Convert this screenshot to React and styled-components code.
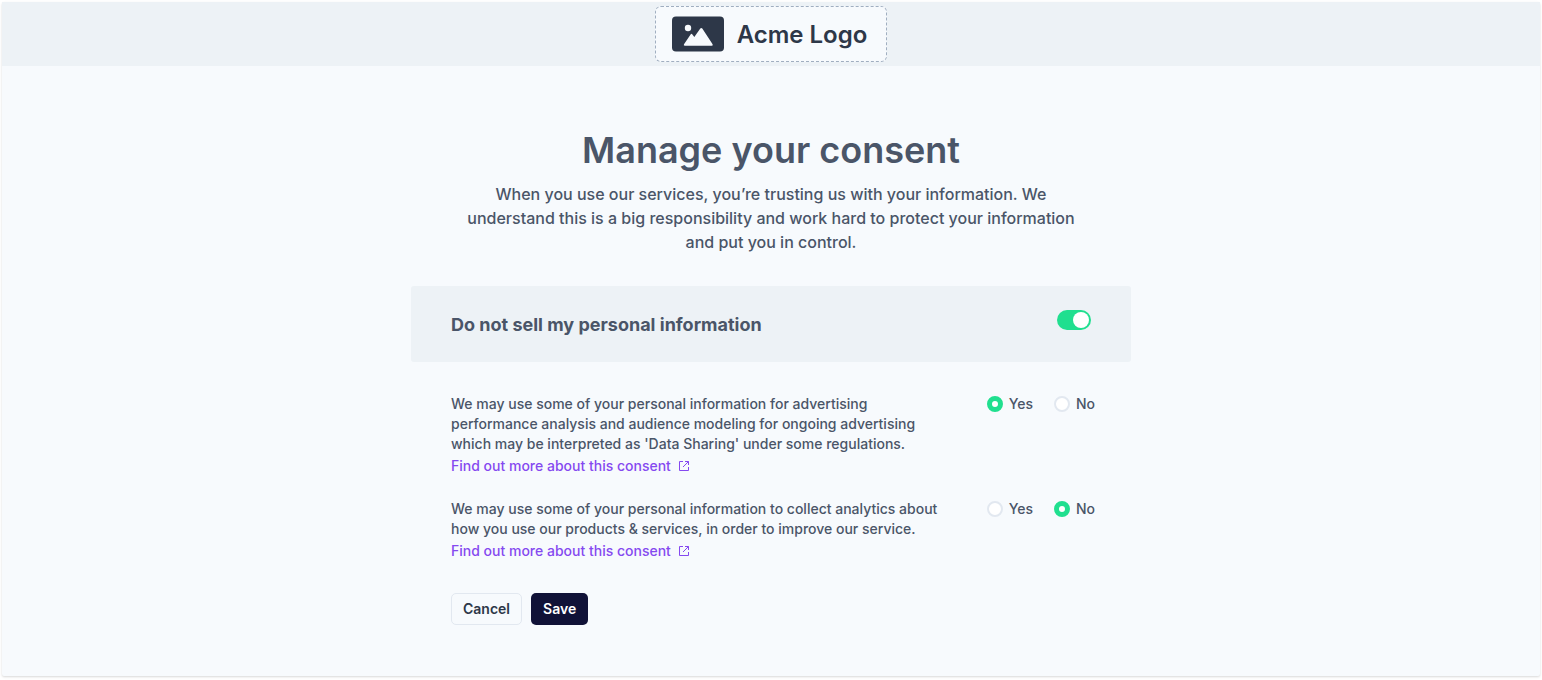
import React, { useState } from "react";
import styled, { createGlobalStyle } from "styled-components";

const GlobalStyle = createGlobalStyle`
  *, *::before, *::after { box-sizing: border-box; }
  body {
    margin: 0;
    background: #ffffff;
    font-family: Inter, "Liberation Sans", sans-serif;
    color: #4a5568;
  }
  h1, h2, p, fieldset { margin: 0; padding: 0; border: 0; }
`;

const Card = styled.div`
  margin: 2px 2px 4px;
  padding-bottom: 51px;
  background: #f7fafd;
  border-radius: 2px;
  box-shadow: 0 1px 3px rgba(0, 0, 0, 0.1), 0 1px 2px rgba(0, 0, 0, 0.06);
`;

const Header = styled.header`
  display: flex;
  justify-content: center;
  padding: 4px;
  background: #edf2f6;
`;

const Brand = styled.div`
  display: flex;
  align-items: center;
  gap: 13px;
  height: 56px;
  padding: 0 19px 0 16px;
  border: 1px dashed #a0aec0;
  border-radius: 6px;
  background: #f7fafd;
  color: #2d3748;
  font-size: 24px;
  line-height: 32px;
  font-weight: 600;
  white-space: nowrap;
`;

const BrandName = styled.span`
  padding-top: 2px;
`;

const Main = styled.main`
  max-width: 720px;
  margin: 0 auto;
  padding-top: 60px;
`;

const Intro = styled.section`
  max-width: 640px;
  margin: 0 auto 32px;
  padding: 0 16px;
  text-align: center;
`;

const Title = styled.h1`
  font-size: 36px;
  line-height: 48px;
  font-weight: 600;
  margin-bottom: 8px;
`;

const Lead = styled.p`
  font-size: 16px;
  line-height: 24px;
  font-weight: 500;
`;

const Panel = styled.label`
  display: flex;
  justify-content: space-between;
  align-items: flex-start;
  padding: 24px 40px 22px;
  border-radius: 3px;
  background: #edf2f6;
`;

const PanelTitle = styled.span`
  font-size: 18px;
  line-height: 30px;
  font-weight: 700;
`;

const Toggle = styled.input`
  appearance: none;
  display: flex;
  width: 34px;
  height: 20px;
  margin: 0;
  padding: 2px;
  border-radius: 10px;
  background: #cbd5e0;
  cursor: pointer;

  &::before {
    content: "";
    width: 16px;
    height: 16px;
    border-radius: 50%;
    background: #ffffff;
  }
  &:checked {
    justify-content: flex-end;
    background: #20df8f;
  }
`;

const Form = styled.form`
  display: flex;
  flex-direction: column;
  gap: 32px;
  padding: 32px 36px 0 40px;
`;

const ConsentList = styled.div`
  display: flex;
  flex-direction: column;
  gap: 23px;
`;

const ConsentRow = styled.div`
  display: flex;
  justify-content: space-between;
  align-items: flex-start;
  gap: 24px;
`;

const ConsentText = styled.div`
  max-width: 496px;
  font-size: 14px;
  line-height: 20px;
  font-weight: 500;
`;

const MoreLink = styled.a`
  display: inline-flex;
  align-items: center;
  gap: 7px;
  margin-top: 2px;
  vertical-align: top;
  color: #8549f0;
  text-decoration: none;
`;

const Choices = styled.fieldset`
  display: flex;
  gap: 21px;
`;

const Choice = styled.label`
  display: flex;
  align-items: center;
  gap: 6px;
  font-size: 14px;
  line-height: 20px;
  font-weight: 500;
`;

const Radio = styled.input`
  appearance: none;
  width: 16px;
  height: 16px;
  margin: 0;
  border: 2px solid #e2e8f0;
  border-radius: 50%;
  background: #ffffff;
  cursor: pointer;

  &:checked {
    border: 5px solid #20df8f;
  }
`;

const Actions = styled.div`
  display: flex;
  gap: 9px;
`;

const Button = styled.button`
  height: 32px;
  padding: 0 ${(p) => (p.$primary ? "12px" : "11px")};
  border: ${(p) => (p.$primary ? "0" : "1px solid #e2e8f0")};
  border-radius: 5px;
  background: ${(p) => (p.$primary ? "#101237" : "#f7fafd")};
  color: ${(p) => (p.$primary ? "#ffffff" : "#2d3748")};
  font-family: inherit;
  font-size: 14px;
  line-height: 20px;
  font-weight: 600;
  cursor: pointer;
`;

const PictureMark = () => (
  <svg width="52" height="36" viewBox="0 0 52 36" aria-hidden="true">
    <rect y="0.5" width="52" height="35" rx="4" fill="#2d3748" />
    <circle cx="16" cy="12" r="3.2" fill="#f7fafd" />
    <path
      d="M12 28.2 L18.6 18.4 Q19.4 17.3 20.2 18.3 L22.3 21 L28.3 12.6 Q29.3 11.3 30.3 12.6 L40.6 28.2 Q41.2 29.8 39.6 29.8 L12.8 29.8 Q11.2 29.6 12 28.2Z"
      fill="#f7fafd"
    />
  </svg>
);

const ExternalIcon = () => (
  <svg width="12" height="12" viewBox="0 0 12 12" fill="none" stroke="currentColor" aria-hidden="true">
    <path d="M5 1.5H1.5V10.5H10.5V7" />
    <path d="M7 1.5H10.5V5M10.5 1.5L5 7" />
  </svg>
);

const consents = [
  {
    id: "advertising",
    text: "We may use some of your personal information for advertising performance analysis and audience modeling for ongoing advertising which may be interpreted as 'Data Sharing' under some regulations.",
    initial: "Yes",
  },
  {
    id: "analytics",
    text: "We may use some of your personal information to collect analytics about how you use our products & services, in order to improve our service.",
    initial: "No",
  },
];

function Consent({ id, text, initial }) {
  const [value, setValue] = useState(initial);
  return (
    <ConsentRow>
      <ConsentText>
        <p id={`${id}-text`}>{text}</p>
        <MoreLink href={`#${id}`}>
          Find out more about this consent
          <ExternalIcon />
        </MoreLink>
      </ConsentText>
      <Choices aria-labelledby={`${id}-text`}>
        {["Yes", "No"].map((option) => (
          <Choice key={option}>
            <Radio
              type="radio"
              name={id}
              checked={value === option}
              onChange={() => setValue(option)}
            />
            {option}
          </Choice>
        ))}
      </Choices>
    </ConsentRow>
  );
}

export default function App() {
  return (
    <>
      <GlobalStyle />
      <Card>
        <Header>
          <Brand>
            <PictureMark />
            <BrandName>Acme Logo</BrandName>
          </Brand>
        </Header>
        <Main>
          <Intro>
            <Title>Manage your consent</Title>
            <Lead>
              When you use our services, you’re trusting us with your information. We understand
              this is a big responsibility and work hard to protect your information and put you in
              control.
            </Lead>
          </Intro>
          <Panel>
            <PanelTitle>Do not sell my personal information</PanelTitle>
            <Toggle type="checkbox" role="switch" defaultChecked />
          </Panel>
          <Form onSubmit={(e) => e.preventDefault()}>
            <ConsentList>
              {consents.map((c) => (
                <Consent key={c.id} {...c} />
              ))}
            </ConsentList>
            <Actions>
              <Button type="button">Cancel</Button>
              <Button type="submit" $primary>
                Save
              </Button>
            </Actions>
          </Form>
        </Main>
      </Card>
    </>
  );
}
